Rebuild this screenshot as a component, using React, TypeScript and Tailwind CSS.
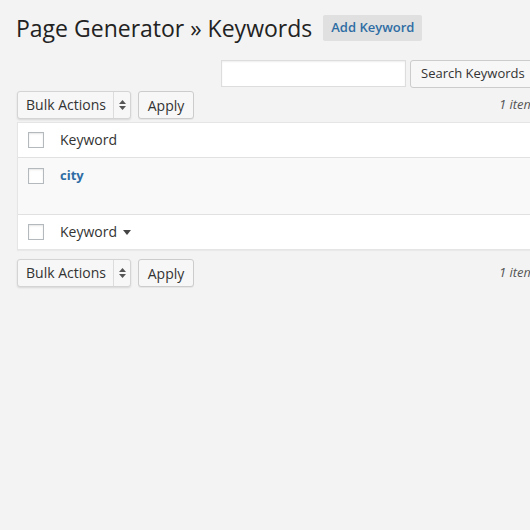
import React from 'react';

const font = { fontFamily: '"Open Sans", "Noto Sans", sans-serif' };

function Checkbox() {
  return <span className="block w-4 h-4 border border-[#b4b9be] bg-white shadow-[inset_0_1px_2px_rgba(0,0,0,0.1)]" />;
}

function TableNav() {
  return (
    <div className="flex items-center w-[600px]">
      <div className="flex items-center h-[28px] w-[114px] rounded-[3px] border border-[#d4d4d4] bg-[#f7f7f7] shadow-[0_1px_2px_rgba(0,0,0,0.12)]">
        <span className="pl-[8px] text-[14px] text-[#333] flex-1 leading-none">Bulk Actions</span>
        <span className="h-full w-[17px] border-l border-[#dcdcdc] flex flex-col items-center justify-center gap-[2px]">
          <svg width="7" height="4" viewBox="0 0 7 4"><path d="M0 4 L3.5 0 L7 4 Z" fill="#555" /></svg>
          <svg width="7" height="4" viewBox="0 0 7 4"><path d="M0 0 L3.5 4 L7 0 Z" fill="#555" /></svg>
        </span>
      </div>
      <button className="ml-[7px] h-[28px] w-[56px] rounded-[3px] border border-[#ccc] bg-[#f7f7f7] text-[14px] text-[#333] shadow-[0_1px_0_rgba(0,0,0,0.05)]">
        Apply
      </button>
      <span className="ml-[305px] italic text-[13px] text-[#555] whitespace-nowrap">1 items</span>
    </div>
  );
}

export default function App() {
  return (
    <div className="w-[530px] h-[530px] overflow-hidden bg-[#f3f3f3]" style={font}>
      <div className="w-[600px] pl-[17px]">
        <div className="flex items-center pt-[13px]">
          <h1 className="text-[23px] text-[#222] -ml-[1px] leading-[30px]">Page Generator » Keywords</h1>
          <span className="ml-[11px] h-[26px] px-[8px] flex items-center bg-[#e0e0e0] rounded-[2px] text-[13px] font-semibold text-[#2e6da4]">
            Add Keyword
          </span>
        </div>

        <div className="flex gap-[4px] mt-[17px] ml-[204px]">
          <input className="h-[27px] w-[185px] bg-white border border-[#ddd] shadow-[inset_0_1px_2px_rgba(0,0,0,0.07)] outline-none" />
          <button className="h-[28px] px-[10px] rounded-[3px] border border-[#ccc] bg-[#f7f7f7] text-[13px] text-[#333] whitespace-nowrap">
            Search Keywords
          </button>
        </div>

        <div className="mt-[3px]">
          <TableNav />
        </div>

        <div className="mt-[3px] w-[600px] bg-white border border-[#e5e5e5] shadow-[0_1px_1px_rgba(0,0,0,0.04)]">
          <div className="flex items-center h-[35px] border-b border-[#e1e1e1] pl-[10px]">
            <Checkbox />
            <span className="ml-[16px] text-[14px] text-[#333] -mt-[2px]">Keyword</span>
          </div>
          <div className="h-[56px] bg-[#f9f9f9] flex items-start pl-[10px] pt-[10px]">
            <Checkbox />
            <span className="ml-[16px] text-[13px] font-bold text-[#2e6da4] -mt-[2px]">city</span>
          </div>
          <div className="flex items-center h-[35px] border-t border-[#e1e1e1] pl-[10px]">
            <Checkbox />
            <span className="ml-[16px] text-[14px] text-[#333] -mt-[2px]">Keyword</span>
            <svg className="ml-[6px]" width="8" height="5" viewBox="0 0 8 5"><path d="M0 0 L8 0 L4 5 Z" fill="#444" /></svg>
          </div>
        </div>

        <div className="mt-[9px]">
          <TableNav />
        </div>
      </div>
    </div>
  );
}
